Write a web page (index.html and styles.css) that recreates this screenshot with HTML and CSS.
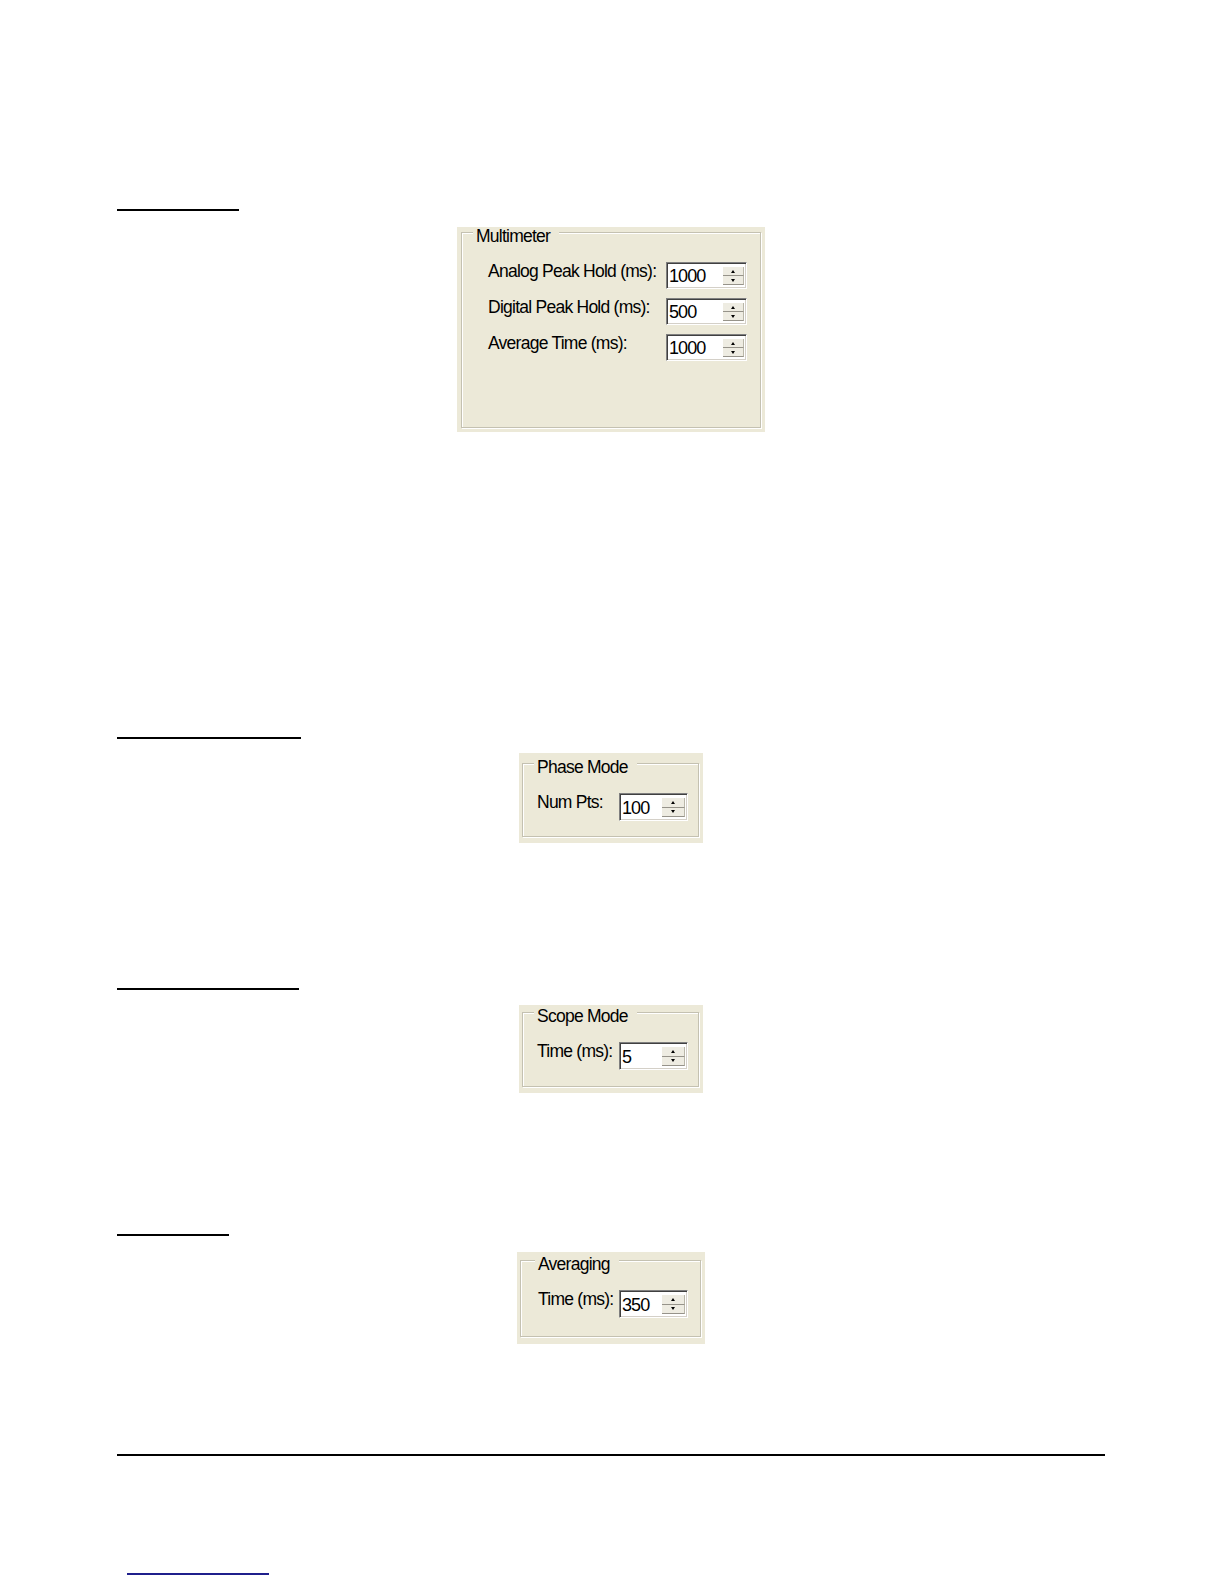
FILE: index.html
```html
<!DOCTYPE html>
<html lang="en">
<head>
<meta charset="utf-8">
<title>Settings</title>
<link rel="stylesheet" href="styles.css">
</head>
<body>
<main class="page">
  <span class="head-rule head-rule-1"></span>
  <div class="panel panel-multi">
    <div class="group group-multi">
      <span class="legend">Multimeter</span>
      <div class="rows rows-multi">
        <span class="label">Analog Peak Hold (ms):</span>
        <div class="spin spin-wide"><span class="val">1000</span><span class="btns"><span class="btn up"></span><span class="btn down"></span></span></div>
        <span class="label">Digital Peak Hold (ms):</span>
        <div class="spin spin-wide"><span class="val">500</span><span class="btns"><span class="btn up"></span><span class="btn down"></span></span></div>
        <span class="label">Average Time (ms):</span>
        <div class="spin spin-wide"><span class="val">1000</span><span class="btns"><span class="btn up"></span><span class="btn down"></span></span></div>
      </div>
    </div>
  </div>

  <span class="head-rule head-rule-2"></span>
  <div class="panel panel-small panel-phase">
    <div class="group group-phase">
      <span class="legend">Phase Mode</span>
      <div class="rows rows-small">
        <span class="label">Num Pts:</span>
        <div class="spin spin-small"><span class="val">100</span><span class="btns"><span class="btn up"></span><span class="btn down"></span></span></div>
      </div>
    </div>
  </div>

  <span class="head-rule head-rule-3"></span>
  <div class="panel panel-small panel-scope">
    <div class="group group-scope">
      <span class="legend">Scope Mode</span>
      <div class="rows rows-small">
        <span class="label">Time (ms):</span>
        <div class="spin spin-small"><span class="val">5</span><span class="btns"><span class="btn up"></span><span class="btn down"></span></span></div>
      </div>
    </div>
  </div>

  <span class="head-rule head-rule-4"></span>
  <div class="panel panel-small panel-avg">
    <div class="group group-avg">
      <span class="legend legend-avg">Averaging</span>
      <div class="rows rows-small rows-avg">
        <span class="label">Time (ms):</span>
        <div class="spin spin-small"><span class="val">350</span><span class="btns"><span class="btn up"></span><span class="btn down"></span></span></div>
      </div>
    </div>
  </div>

  <hr class="foot-rule">
  <a class="foot-link" href="#"></a>
</main>
</body>
</html>
```

FILE: styles.css
```css
html, body {
  margin: 0;
  background: #ffffff;
}

body {
  font-family: "Liberation Sans", Arial, sans-serif;
  color: #000000;
}

.page {
  box-sizing: border-box;
  height: 1584px;
  padding: 209px 119px 0 117px;
  display: flex;
  flex-direction: column;
}

/* underlined section headings (text is not visible, only the rule) */
.head-rule {
  display: block;
  height: 0;
  border-bottom: 2px solid #000000;
}
.head-rule-1 { width: 122px; }
.head-rule-2 { width: 184px; margin-top: 305px; }
.head-rule-3 { width: 182px; margin-top: 145px; }
.head-rule-4 { width: 112px; margin-top: 141px; }

/* dialog panels */
.panel {
  align-self: center;
  box-sizing: border-box;
  background: #ece9d8;
}

.panel-multi {
  width: 308px;
  margin-top: 16px;
  padding: 5px 4px 4px 4px;
}

.panel-small {
  width: 184px;
  padding: 10px 4px 6px 3px;
}

.panel-phase { margin-top: 14px; }
.panel-scope { margin-top: 15px; padding-top: 7px; }
.panel-avg { width: 188px; margin-top: 16px; padding-top: 8px; padding-bottom: 7px; }

.group {
  position: relative;
  border: 1px solid #c4c1b1;
  box-shadow: inset 1px 1px 0 #ffffff, 1px 1px 0 #ffffff;
  padding-top: 29px;
}

.group-multi { padding-bottom: 66px; }
.group-phase { padding-bottom: 15px; }
.group-scope { padding-bottom: 16px; }
.group-avg { padding-bottom: 18px; }

.legend {
  position: absolute;
  top: -6px;
  left: 11px;
  padding: 0 9px 0 3px;
  background: #ece9d8;
  font-size: 17.5px;
  line-height: 18px;
  letter-spacing: -0.75px;
  white-space: nowrap;
}
.legend-avg { left: 14px; }

.rows {
  display: grid;
  align-items: start;
}

.rows-multi {
  padding-left: 26px;
  grid-template-columns: 178px 80px;
  row-gap: 9px;
}

.rows-small {
  padding-left: 14px;
  grid-template-columns: 82px 69px;
}
.rows-avg { padding-left: 17px; grid-template-columns: 81px 69px; }

.label {
  font-size: 17.5px;
  line-height: 18px;
  letter-spacing: -0.75px;
  white-space: nowrap;
}

/* spin edit control */
.spin {
  box-sizing: border-box;
  display: flex;
  align-items: stretch;
  background: #ffffff;
  border: 1px solid;
  border-color: #7f7f7f #ffffff #ffffff #7f7f7f;
  box-shadow: inset 1px 1px 0 #404040, inset -1px -1px 0 #d4d0c8;
  padding: 3px 2px 2px 2px;
}

.spin-wide { width: 81px; height: 27px; }
.spin-small { width: 69px; height: 28px; }

.val {
  flex: 1;
  display: flex;
  align-items: center;
  font-size: 18px;
  letter-spacing: -0.9px;
  line-height: 18px;
}

.btns {
  width: 21px;
  display: flex;
  flex-direction: column;
  margin: 1px 0 1px 0;
}

.spin-small .btns { width: 23px; }

.btn {
  flex: 1;
  display: flex;
  align-items: center;
  justify-content: center;
  background: #eeece2;
  border-bottom: 1px solid #96938a;
  border-right: 1px solid #b9b6a8;
}

.btn::before {
  content: "";
  display: block;
  width: 0;
  height: 0;
  border-left: 2.5px solid transparent;
  border-right: 2.5px solid transparent;
}

.up::before { border-bottom: 3px solid #000000; }
.down::before { border-top: 3px solid #000000; }

/* footer */
.foot-rule {
  margin: 110px 0 0 0;
  height: 0;
  border: 0;
  border-top: 2px solid #000000;
}

.foot-link {
  display: block;
  width: 142px;
  height: 0;
  margin: 117px 0 0 10px;
  border-bottom: 2px solid #1f1f8c;
}
```
